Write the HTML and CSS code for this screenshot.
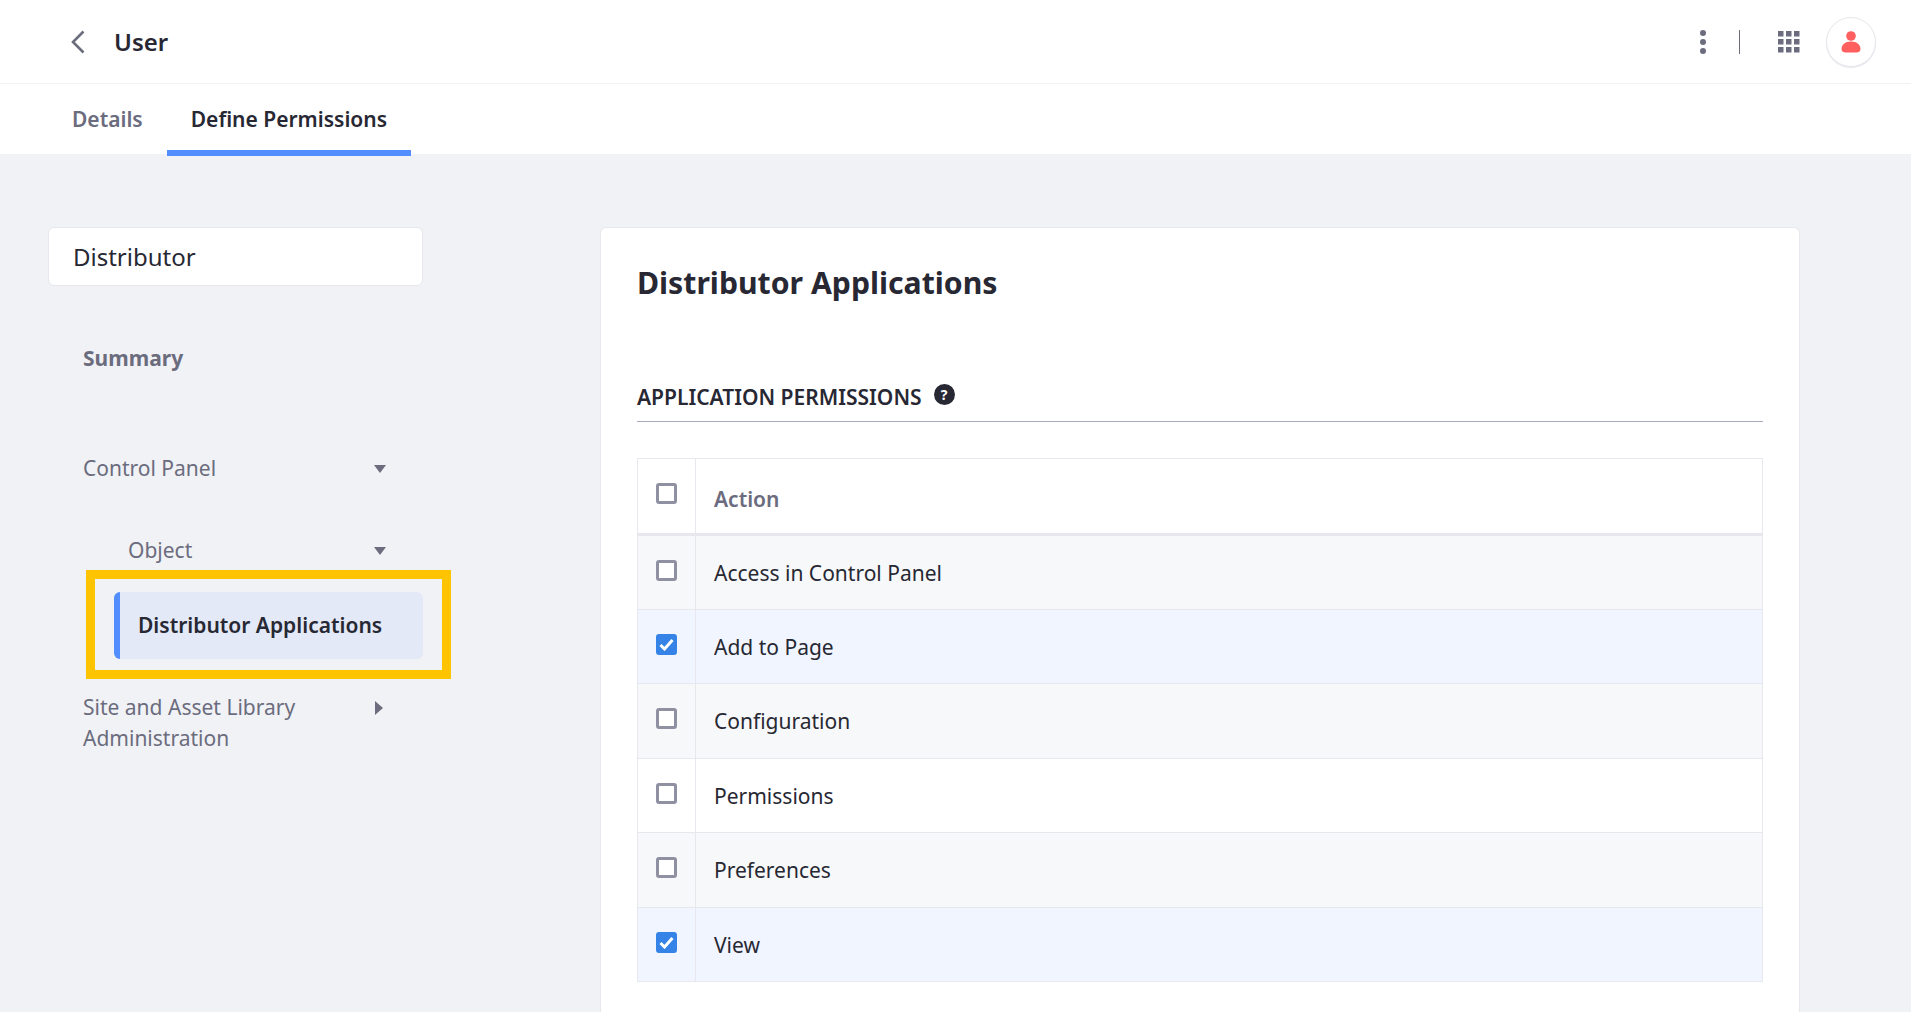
FILE: index.html
```html
<!DOCTYPE html>
<html lang="en">
<head>
    <meta charset="UTF-8">
    <meta name="viewport" content="width=device-width, initial-scale=1.0">
    <title>User</title>
    <link rel="stylesheet" href="styles.css">
</head>
<body>
    <header class="topbar">
        <div class="topbar-left">
            <svg class="back" width="16" height="24" viewBox="0 0 16 24"><path d="M13.500 1.500 3 12l10.500 10.500" fill="none" stroke="#6b6c7e" stroke-width="2.600"/></svg>
            <span class="page-title">User</span>
        </div>
        <div class="topbar-right">
            <svg class="kebab" width="8" height="24" viewBox="0 0 8 24"><circle cx="4" cy="3" r="3"/><circle cx="4" cy="12" r="3"/><circle cx="4" cy="21" r="3"/></svg>
            <span class="divider"></span>
            <svg class="apps" width="22" height="22" viewBox="0 0 22 22"><rect x="0" y="0" width="5.5" height="5.5"/><rect x="8" y="0" width="5.5" height="5.5"/><rect x="16" y="0" width="5.5" height="5.5"/><rect x="0" y="8" width="5.5" height="5.5"/><rect x="8" y="8" width="5.5" height="5.5"/><rect x="16" y="8" width="5.5" height="5.5"/><rect x="0" y="16" width="5.5" height="5.5"/><rect x="8" y="16" width="5.5" height="5.5"/><rect x="16" y="16" width="5.5" height="5.5"/></svg>
            <span class="avatar">
                <svg width="20" height="22" viewBox="0 0 20 22"><circle cx="10" cy="5" r="4.8" fill="#ff5f5f"/><path d="M10 10.500c6 0 9.500 3.500 9.500 7.500 0 2.500-2 3.500-4 3.500h-11c-2 0-4-1-4-3.500 0-4 3.500-7.500 9.500-7.500z" fill="#ff5f5f"/></svg>
            </span>
        </div>
    </header>

    <nav class="tabs">
        <a class="tab">Details</a>
        <a class="tab active">Define Permissions</a>
    </nav>

    <div class="content">
        <aside class="sidebar">
            <div class="role-card">Distributor</div>
            <ul class="menu">
                <li class="summary">Summary</li>
                <li class="menu-row control-row">
                    <span>Control Panel</span>
                    <span class="caret-down"></span>
                </li>
                <li class="menu-row object-row">
                    <span>Object</span>
                    <span class="caret-down"></span>
                </li>
                <li class="current-wrap">
                    <span class="highlight"></span>
                    <div class="current">Distributor Applications</div>
                </li>
                <li class="menu-row site-row">
                    <span>Site and Asset Library Administration</span>
                    <span class="caret-right"></span>
                </li>
            </ul>
        </aside>

        <main class="panel">
            <h1>Distributor Applications</h1>
            <h2 class="section-title">
                APPLICATION PERMISSIONS
                <span class="help">?</span>
            </h2>
            <table class="perm-table">
                <thead>
                    <tr>
                        <th class="check-col"><span class="check"></span></th>
                        <th>Action</th>
                    </tr>
                </thead>
                <tbody>
                    <tr class="alt">
                        <td class="check-col"><span class="check"></span></td>
                        <td>Access in Control Panel</td>
                    </tr>
                    <tr class="selected">
                        <td class="check-col"><span class="check on"><svg width="15" height="13" viewBox="0 0 15 13"><path d="M1.500 7l4 4 8-9" fill="none" stroke="#fff" stroke-width="3"/></svg></span></td>
                        <td>Add to Page</td>
                    </tr>
                    <tr class="alt">
                        <td class="check-col"><span class="check"></span></td>
                        <td>Configuration</td>
                    </tr>
                    <tr>
                        <td class="check-col"><span class="check"></span></td>
                        <td>Permissions</td>
                    </tr>
                    <tr class="alt">
                        <td class="check-col"><span class="check"></span></td>
                        <td>Preferences</td>
                    </tr>
                    <tr class="selected">
                        <td class="check-col"><span class="check on"><svg width="15" height="13" viewBox="0 0 15 13"><path d="M1.500 7l4 4 8-9" fill="none" stroke="#fff" stroke-width="3"/></svg></span></td>
                        <td>View</td>
                    </tr>
                </tbody>
            </table>
        </main>
    </div>
</body>
</html>
```

FILE: styles.css
```css
* {margin: 0; padding: 0; box-sizing: border-box;}
html, body {height: 100%; overflow: hidden;}
body {font-family: "Noto Sans", sans-serif; font-size: 21px; color: #272833; background: #f1f2f5;
    display: flex; flex-direction: column;}

/* top bar */
.topbar {height: 84px; flex: none; background: #fff; border-bottom: 1px solid #f1f2f5;
    display: flex; justify-content: space-between; align-items: center; padding: 0 35px 0 70px;}
.topbar-left {display: flex; align-items: center; gap: 28px;}
.back {display: block;}
.page-title {font-size: 24px; font-weight: 600;}
.topbar-right {display: flex; align-items: center;}
.kebab {fill: #6b6c7e; display: block;}
.divider {width: 1px; height: 24px; background: #6b6c7e; margin: 0 38px 0 32px;}
.apps {fill: #6b6c7e; display: block; margin-right: 26px;}
.avatar {width: 50px; height: 50px; border-radius: 50%; background: #fff;
    border: 1px solid #e7e7ed; box-shadow: 0 1px 1px #e7e7ed;
    display: flex; align-items: center; justify-content: center;}

/* tabs */
.tabs {height: 70px; flex: none; background: #fff; display: flex; padding-left: 48px;}
.tab {height: 72px; padding: 0 24px; font-size: 21px; font-weight: 600; line-height: 70px;
    color: #6b6c7e; position: relative;}
.tab.active {color: #272833; border-bottom: 6px solid #528eff;}

/* layout */
.content {flex: 1; min-height: 0; display: flex; padding: 73px 111px 0 48px; gap: 177px;}

/* sidebar */
.sidebar {width: 375px; flex: none;}
.role-card {height: 59px; background: #fff; border: 1px solid #e7e7ed; border-radius: 6px;
    padding-left: 24px; line-height: 57px; font-size: 24px;}
.menu {list-style: none; color: #6b6c7e; font-size: 21px; padding-left: 1px;}
.summary {font-weight: 700; padding-left: 34px; margin-top: 56px; line-height: 32px;}
.menu-row {display: flex; justify-content: space-between; padding: 0 37px 0 34px; line-height: 31px;}
.control-row {margin-top: 79px; align-items: center;}
.object-row {margin-top: 51px; padding-left: 79px; align-items: center;}
.site-row {margin-top: 33px;}
.site-row span:first-child {width: 240px;}
.caret-down {width: 0; height: 0; border-left: 6.500px solid transparent; border-right: 6.500px solid transparent;
    border-top: 8px solid #6b6c7e;}
.caret-right {width: 0; height: 0; margin: 9px 3px 0 0; border-top: 7px solid transparent;
    border-bottom: 7px solid transparent; border-left: 8px solid #6b6c7e;}
.current-wrap {position: relative; margin: 26px 0 0 65px; width: 309px;}
.current {height: 67px; background: #e3e9f6; border-left: 6px solid #528eff; border-radius: 6px;
    padding-left: 18px; line-height: 66px; font-weight: 600; color: #272833;}
.highlight {position: absolute; left: -28px; right: -28px; top: -22px; bottom: -20px; border: 9px solid #ffc400;}

/* panel */
.panel {flex: 1; background: #fff; border: 1px solid #e7e7ed; border-bottom: none; border-radius: 6px 6px 0 0;
    padding: 0 36px;}
.panel h1 {font-size: 30.200px; font-weight: 700; line-height: 40px; margin-top: 35px;}
.section-title {font-size: 21px; font-weight: 600; line-height: 30px; margin-top: 79px;
    padding-bottom: 9px; border-bottom: 1px solid #a7a9bc; display: flex; align-items: center; gap: 12px;}
.help {width: 21px; height: 21px; border-radius: 50%; background: #272833; color: #fff;
    font-size: 14px; font-weight: 700; text-align: center; line-height: 21px; margin-top: -6px;}
.perm-table {width: 100%; margin-top: 36px; border-collapse: collapse; border: 1px solid #e7e7ed;}
.perm-table th, .perm-table td {text-align: left; height: 74.500px; padding: 0 18px;
    border: 1px solid #e7e7ed; vertical-align: middle;}
.perm-table th {height: 76px; font-weight: 600; color: #6b6c7e; border-bottom: 3px solid #e7e7ed; padding-top: 6px;}
.perm-table .check-col {width: 58px; padding: 0;}
.perm-table th.check-col {padding-bottom: 6px;}
.perm-table td.check-col {padding-bottom: 4px;}
.perm-table td {padding-top: 1px;}
.perm-table tr.alt td {background: #f7f8f9;}
.perm-table tr.selected td {background: #f0f5ff;}
.check {display: block; width: 21px; height: 21px; margin: 0 auto; background: #fff;
    border: 3px solid #8f90a2; border-radius: 3px;}
.check.on {background: #3583e6; border-color: #3583e6; display: flex; align-items: center; justify-content: center;}
```
